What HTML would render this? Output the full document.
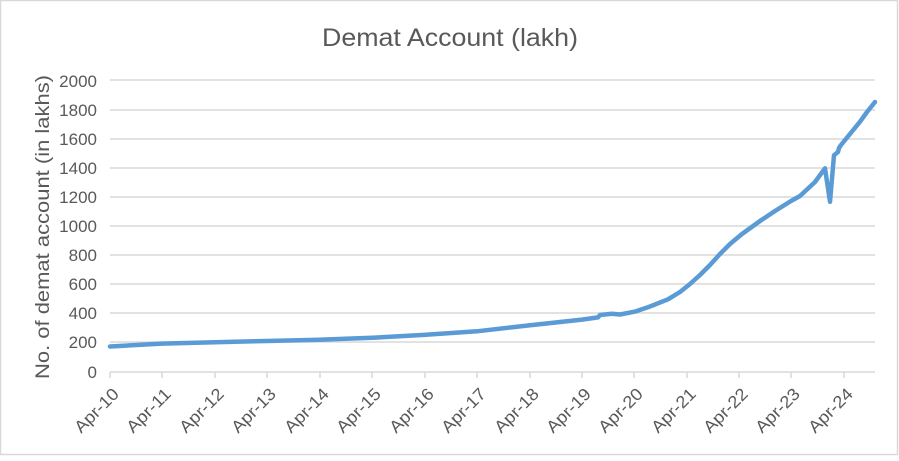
<!DOCTYPE html>
<html><head><style>
html,body{margin:0;padding:0;background:#fff;}
svg text{font-family:"Liberation Sans",sans-serif;fill:#595959;}
</style></head><body>
<svg width="899" height="456" viewBox="0 0 899 456" xmlns="http://www.w3.org/2000/svg">
<rect x="0.5" y="0.5" width="897" height="454" fill="#fff" stroke="#d9d9d9" stroke-width="1.5"/>
<text x="450" y="46" font-size="25" text-anchor="middle" textLength="256" lengthAdjust="spacingAndGlyphs">Demat Account (lakh)</text>
<g stroke="#d9d9d9" stroke-width="1.5">
<line x1="110" x2="875" y1="80" y2="80"/><line x1="110" x2="875" y1="110" y2="110"/>
<line x1="110" x2="875" y1="139" y2="139"/><line x1="110" x2="875" y1="168" y2="168"/>
<line x1="110" x2="875" y1="197" y2="197"/><line x1="110" x2="875" y1="226" y2="226"/>
<line x1="110" x2="875" y1="255" y2="255"/><line x1="110" x2="875" y1="284" y2="284"/>
<line x1="110" x2="875" y1="313" y2="313"/><line x1="110" x2="875" y1="342" y2="342"/>
<line x1="110" x2="875" y1="372" y2="372"/>
<line x1="110" x2="110" y1="372" y2="378"/><line x1="162" x2="162" y1="372" y2="378"/>
<line x1="215" x2="215" y1="372" y2="378"/><line x1="267" x2="267" y1="372" y2="378"/>
<line x1="320" x2="320" y1="372" y2="378"/><line x1="372" x2="372" y1="372" y2="378"/>
<line x1="425" x2="425" y1="372" y2="378"/><line x1="477" x2="477" y1="372" y2="378"/>
<line x1="530" x2="530" y1="372" y2="378"/><line x1="582" x2="582" y1="372" y2="378"/>
<line x1="634" x2="634" y1="372" y2="378"/><line x1="687" x2="687" y1="372" y2="378"/>
<line x1="739" x2="739" y1="372" y2="378"/><line x1="791" x2="791" y1="372" y2="378"/>
<line x1="844" x2="844" y1="372" y2="378"/>
</g>
<g font-size="17" text-anchor="end">
<text x="97" y="87">2000</text><text x="97" y="116">1800</text><text x="97" y="145">1600</text>
<text x="97" y="174">1400</text><text x="97" y="203">1200</text><text x="97" y="232">1000</text>
<text x="97" y="261">800</text><text x="97" y="290">600</text><text x="97" y="319">400</text>
<text x="97" y="348">200</text><text x="97" y="378">0</text>
</g>
<text transform="translate(49,227) rotate(-90)" font-size="19" text-anchor="middle" textLength="304" lengthAdjust="spacingAndGlyphs">No. of demat account (in lakhs)</text>
<g font-size="17" text-anchor="end">
<text transform="translate(120,395) rotate(-45)" textLength="55" lengthAdjust="spacingAndGlyphs">Apr-10</text>
<text transform="translate(172,395) rotate(-45)" textLength="55" lengthAdjust="spacingAndGlyphs">Apr-11</text>
<text transform="translate(225,395) rotate(-45)" textLength="55" lengthAdjust="spacingAndGlyphs">Apr-12</text>
<text transform="translate(277,395) rotate(-45)" textLength="55" lengthAdjust="spacingAndGlyphs">Apr-13</text>
<text transform="translate(330,395) rotate(-45)" textLength="55" lengthAdjust="spacingAndGlyphs">Apr-14</text>
<text transform="translate(382,395) rotate(-45)" textLength="55" lengthAdjust="spacingAndGlyphs">Apr-15</text>
<text transform="translate(435,395) rotate(-45)" textLength="55" lengthAdjust="spacingAndGlyphs">Apr-16</text>
<text transform="translate(487,395) rotate(-45)" textLength="55" lengthAdjust="spacingAndGlyphs">Apr-17</text>
<text transform="translate(540,395) rotate(-45)" textLength="55" lengthAdjust="spacingAndGlyphs">Apr-18</text>
<text transform="translate(592,395) rotate(-45)" textLength="55" lengthAdjust="spacingAndGlyphs">Apr-19</text>
<text transform="translate(644,395) rotate(-45)" textLength="55" lengthAdjust="spacingAndGlyphs">Apr-20</text>
<text transform="translate(697,395) rotate(-45)" textLength="55" lengthAdjust="spacingAndGlyphs">Apr-21</text>
<text transform="translate(749,395) rotate(-45)" textLength="55" lengthAdjust="spacingAndGlyphs">Apr-22</text>
<text transform="translate(801,395) rotate(-45)" textLength="55" lengthAdjust="spacingAndGlyphs">Apr-23</text>
<text transform="translate(854,395) rotate(-45)" textLength="55" lengthAdjust="spacingAndGlyphs">Apr-24</text>
</g>
<polyline fill="none" stroke="#5b9bd5" stroke-width="4.5" stroke-linejoin="round" stroke-linecap="round"
points="110,346.5 162,343.6 215,342.2 267,341 319,339.7 372,337.8 424,334.9 477,331.3 529,325.4 582,319.6 598,317.4 600,315 612,313.8 620,314.5 635,311.6 650,306.5 668,299.3 680,292 690,284 700,275 710,265 720,254 730,244 742,234 760,221 775,211 791,201 800,196 815,182 825,168.3 830,201.8 834,155.2 838,152 839,148 841,145 860,121.7 867,112 875,102"/>
</svg>
</body></html>
